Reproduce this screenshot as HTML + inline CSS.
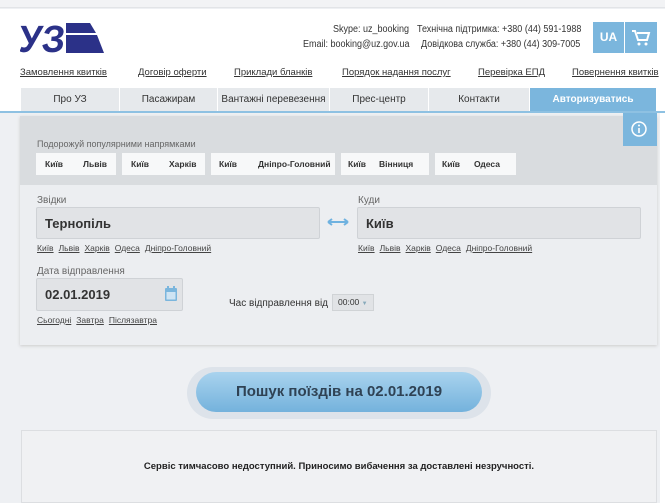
<!DOCTYPE html>
<html><head><meta charset="utf-8"><style>
*{margin:0;padding:0;box-sizing:border-box}
body{width:665px;height:503px;overflow:hidden;background:#eef0f3;font-family:"Liberation Sans",sans-serif;font-size:10px;color:#333;position:relative}
.a{position:absolute}
u{text-decoration:underline}
.link{color:#333;font-size:9.5px}
.tab{position:absolute;top:88px;height:23px;background:#e6e9ec;text-align:center;line-height:23px;font-size:10px;color:#333;border-right:1px solid #fff}
.chip{position:absolute;top:153px;height:22px;background:#f7f8f9;font-size:8.5px;font-weight:bold;line-height:22px;color:#333}
.inp{position:absolute;background:#e1e3e6;border:1px solid #cfd2d6;border-radius:2px;font-size:13px;font-weight:bold;color:#333}
.lbl{position:absolute;font-size:10px;color:#666}
.sl{position:absolute;font-size:8.5px;color:#444}
.sl u{margin-right:5px}
.hd{position:absolute;font-size:10px;color:#333;white-space:nowrap;transform:scaleX(0.9);transform-origin:left top}
</style></head><body>
<div class="a" style="left:0;top:0;width:665px;height:8px;background:#f2f3f5;border-bottom:1px solid #e2e4e7"></div>
<div class="a" style="left:0;top:9px;width:665px;height:104px;background:#fff"></div>
<svg class="a" style="left:20px;top:22px" width="86" height="32" viewBox="0 0 86 32">
<text x="1" y="30" font-family="Liberation Sans" font-weight="bold" font-size="38" fill="#2b3188" transform="skewX(-6)" textLength="46" lengthAdjust="spacingAndGlyphs">УЗ</text>
<polygon points="46,1 70,1 76,11 46,11" fill="#2b3188"/>
<polygon points="46,13 77,13 84,31 46,31" fill="#2b3188"/>
</svg>
<div class="hd" style="left:333px;top:24px">Skype: uz_booking</div>
<div class="hd" style="left:417px;top:24px">Технічна підтримка: +380 (44) 591-1988</div>
<div class="hd" style="left:303px;top:39px">Email: booking@uz.gov.ua</div>
<div class="hd" style="left:421px;top:39px">Довідкова служба: +380 (44) 309-7005</div>
<div class="a" style="left:593px;top:22px;width:31px;height:31px;background:#7bb6dd;color:#fff;font-weight:bold;font-size:12px;text-align:center;line-height:31px">UA</div>
<div class="a" style="left:625px;top:22px;width:32px;height:31px;background:#7bb6dd"></div>
<svg class="a" style="left:631px;top:28px" width="20" height="20" viewBox="0 0 20 20"><path d="M1 3h3l3 9h9l2-7H6" fill="none" stroke="#fff" stroke-width="2"/><circle cx="8" cy="16" r="1.5" fill="#fff"/><circle cx="15" cy="16" r="1.5" fill="#fff"/></svg>
<div class="a link" style="left:20px;top:67px"><u>Замовлення квитків</u></div>
<div class="a link" style="left:138px;top:67px"><u>Договір оферти</u></div>
<div class="a link" style="left:234px;top:67px"><u>Приклади бланків</u></div>
<div class="a link" style="left:342px;top:67px"><u>Порядок надання послуг</u></div>
<div class="a link" style="left:478px;top:67px"><u>Перевірка ЕПД</u></div>
<div class="a link" style="left:572px;top:67px"><u>Повернення квитків</u></div>
<div class="tab" style="left:21px;width:99px">Про УЗ</div>
<div class="tab" style="left:120px;width:98px">Пасажирам</div>
<div class="tab" style="left:218px;width:112px">Вантажні перевезення</div>
<div class="tab" style="left:330px;width:99px">Прес-центр</div>
<div class="tab" style="left:429px;width:101px">Контакти</div>
<div class="tab" style="left:530px;width:127px;background:#7bb6dd;color:#fff;font-weight:bold">Авторизуватись</div>
<div class="a" style="left:0;top:111px;width:665px;height:2px;background:#8ec1e2"></div>
<div class="a" style="left:20px;top:116px;width:637px;height:229px;background:#eceef1;box-shadow:0 1px 3px #ccc"></div>
<div class="a" style="left:20px;top:116px;width:637px;height:69px;background:#d9dcdf"></div>
<div class="a" style="left:623px;top:113px;width:34px;height:33px;background:#7bb6dd"></div>
<svg class="a" style="left:631px;top:121px" width="16" height="16"><circle cx="8" cy="8" r="7" fill="none" stroke="#fff" stroke-width="1.5"/><rect x="7.2" y="7" width="1.6" height="5" fill="#fff"/><circle cx="8" cy="4.5" r="1" fill="#fff"/></svg>
<div class="a" style="left:37px;top:139px;font-size:9px;color:#666">Подорожуй популярними напрямками</div>
<div class="chip" style="left:36px;width:80px"><span style="position:absolute;left:9px">Київ</span><span style="position:absolute;left:47px">Львів</span></div>
<div class="chip" style="left:122px;width:83px"><span style="position:absolute;left:9px">Київ</span><span style="position:absolute;left:47px">Харків</span></div>
<div class="chip" style="left:211px;width:124px"><span style="position:absolute;left:8px">Київ</span><span style="position:absolute;left:47px">Дніпро-Головний</span></div>
<div class="chip" style="left:341px;width:88px"><span style="position:absolute;left:7px">Київ</span><span style="position:absolute;left:38px">Вінниця</span></div>
<div class="chip" style="left:435px;width:81px"><span style="position:absolute;left:7px">Київ</span><span style="position:absolute;left:39px">Одеса</span></div>
<div class="lbl" style="left:37px;top:195px">Звідки</div>
<div class="lbl" style="left:358px;top:195px">Куди</div>
<div class="inp" style="left:36px;top:207px;width:284px;height:32px;padding:8px 8px">Тернопіль</div>
<div class="inp" style="left:357px;top:207px;width:284px;height:32px;padding:8px 8px">Київ</div>
<svg class="a" style="left:326px;top:217px" width="24" height="10"><path d="M2 5h20M2 5l4-3M2 5l4 3M22 5l-4-3M22 5l-4 3" stroke="#6fb2e0" stroke-width="2" fill="none"/></svg>
<div class="sl" style="left:37px;top:243px"><u>Київ</u><u>Львів</u><u>Харків</u><u>Одеса</u><u>Дніпро-Головний</u></div>
<div class="sl" style="left:358px;top:243px"><u>Київ</u><u>Львів</u><u>Харків</u><u>Одеса</u><u>Дніпро-Головний</u></div>
<div class="lbl" style="left:37px;top:266px">Дата відправлення</div>
<div class="inp" style="left:36px;top:278px;width:147px;height:33px;padding:8px 8px">02.01.2019</div>
<svg class="a" style="left:164px;top:286px" width="14" height="16"><rect x="1" y="2" width="12" height="13" rx="1" fill="#7bb6dd"/><rect x="2.5" y="6" width="9" height="7.5" fill="#cfe4f3"/><rect x="3" y="0" width="2" height="4" fill="#7bb6dd"/><rect x="9" y="0" width="2" height="4" fill="#7bb6dd"/></svg>
<div class="sl" style="left:37px;top:315px"><u>Сьогодні</u><u>Завтра</u><u>Післязавтра</u></div>
<div class="a" style="left:229px;top:298px;font-size:10px;color:#333">Час відправлення від</div>
<div class="a" style="left:332px;top:294px;width:42px;height:17px;background:#e1e3e6;border:1px solid #d0d3d6;font-size:8.5px;line-height:15px;padding-left:5px">00:00 <span style="color:#8ab;font-size:6px">▼</span></div>
<div class="a" style="left:187px;top:367px;width:304px;height:52px;border-radius:26px;background:#dde3ea"></div>
<div class="a" style="left:196px;top:372px;width:286px;height:40px;border-radius:20px;background:linear-gradient(#a9d3ee,#74b2dc);text-align:center;line-height:40px;font-size:15px;font-weight:bold;color:#2f4254">Пошук поїздів на 02.01.2019</div>
<div class="a" style="left:21px;top:430px;width:636px;height:73px;background:#f0f1f3;border:1px solid #dcdee1;text-align:center;padding-top:30px;font-size:9.5px;font-weight:bold;color:#222">Сервіс тимчасово недоступний. Приносимо вибачення за доставлені незручності.</div>
<div class="a" style="left:660px;top:113px;width:5px;height:390px;background:#fff"></div>
</body></html>
